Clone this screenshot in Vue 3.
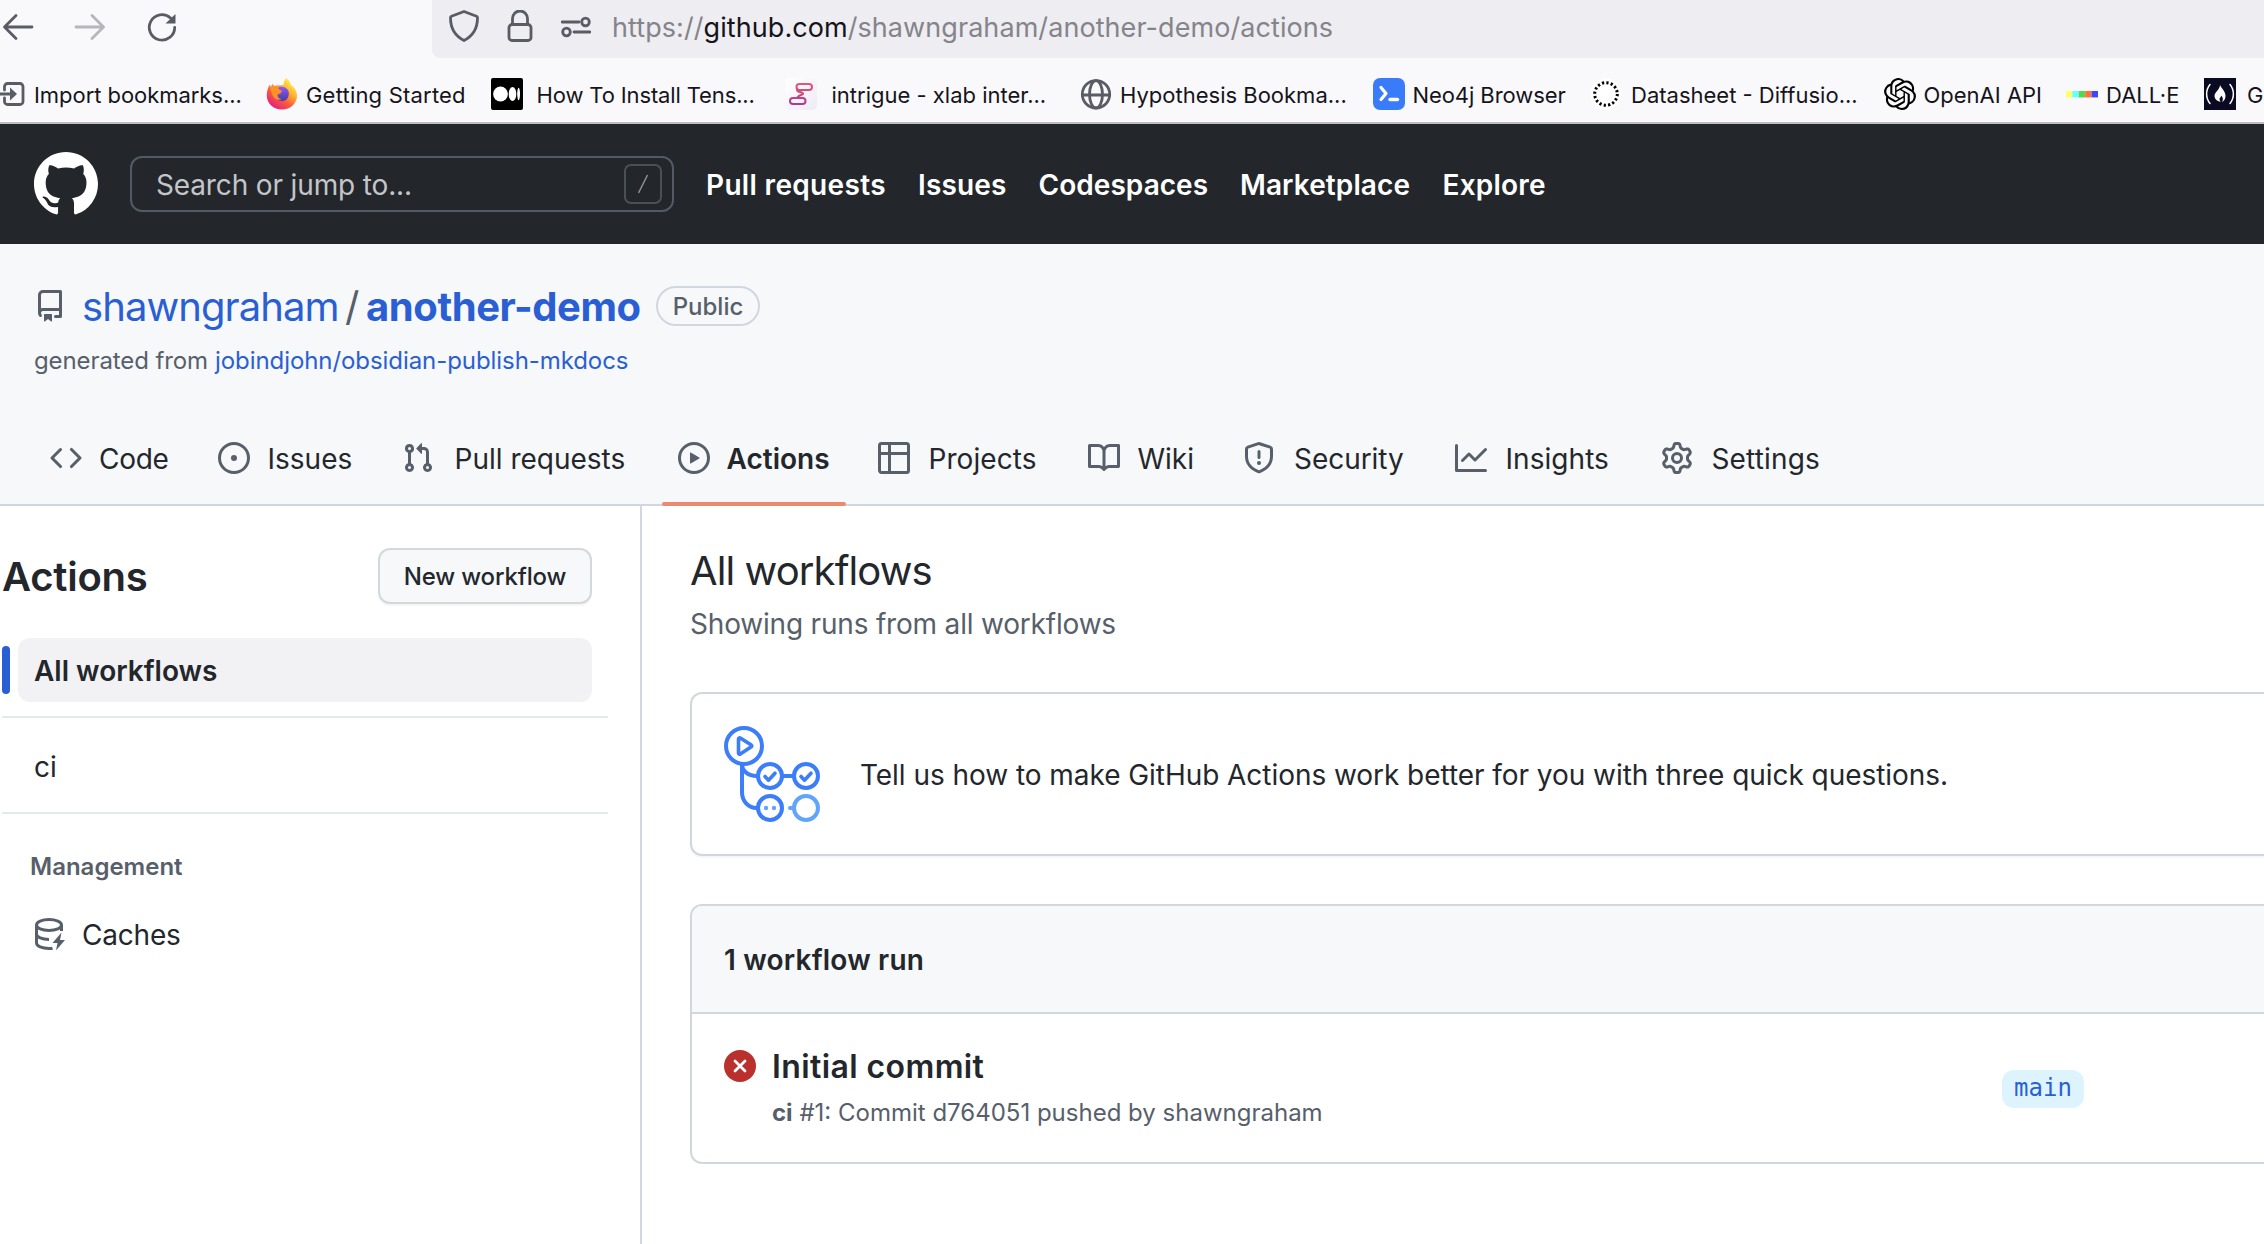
<script setup>
const bookmarks = [
  { icon: 'import', label: 'Import bookmarks...', width: 273, gap: 9, ls: -0.05 },
  { icon: 'firefox', label: 'Getting Started', width: 225, gap: 8, ls: 0.2 },
  { icon: 'medium', label: 'How To Install Tens...', width: 294, gap: 13.5, ls: -0.13 },
  { icon: 'intrigue', label: 'intrigue - xlab inter...', width: 295, gap: 14.5, ls: 0 },
  { icon: 'globe', label: 'Hypothesis Bookma...', width: 293, gap: 8, ls: 0 },
  { icon: 'neo4j', label: 'Neo4j Browser', width: 217, gap: 7.5, ls: -0.08 },
  { icon: 'dots', label: 'Datasheet - Diffusio...', width: 294, gap: 9, ls: 0 },
  { icon: 'openai', label: 'OpenAI API', width: 182, gap: 7.5, ls: 0 },
  { icon: 'dalle', label: 'DALL·E', width: 138, gap: 8, ls: 0 },
  { icon: 'fcc', label: 'G', width: 64, gap: 11, ls: 0 },
]

const nav = [
  { label: 'Pull requests', width: 212, ls: 0.33 },
  { label: 'Issues', width: 120.5, ls: 0.15 },
  { label: 'Codespaces', width: 201.5, ls: 0.05 },
  { label: 'Marketplace', width: 202.5, ls: 0.1 },
  { label: 'Explore', width: 110, ls: 0.2 },
]

const tabs = [
  { label: 'Code', width: 168, gap: 17, ls: -0.3, path: 'M4.72 3.22a.75.75 0 011.06 1.06L2.06 8l3.72 3.72a.75.75 0 11-1.06 1.06L.47 8.53a.75.75 0 010-1.06l4.25-4.25zm6.56 0a.75.75 0 10-1.06 1.06L13.94 8l-3.72 3.72a.75.75 0 101.06 1.06l4.25-4.25a.75.75 0 000-1.06l-4.25-4.25z' },
  { label: 'Issues', width: 184, gap: 17.5, ls: 0, path: 'M8 9.5a1.5 1.5 0 100-3 1.5 1.5 0 000 3zM8 0a8 8 0 100 16A8 8 0 008 0zM1.5 8a6.5 6.5 0 1113 0 6.5 6.5 0 01-13 0z' },
  { label: 'Pull requests', width: 276, gap: 20.5, ls: 0, path: 'M7.177 3.073L9.573.677A.25.25 0 0110 .854v4.792a.25.25 0 01-.427.177L7.177 3.427a.25.25 0 010-.354zM3.75 2.5a.75.75 0 100 1.5.75.75 0 000-1.5zm-2.25.75a2.25 2.25 0 113 2.122v5.256a2.251 2.251 0 11-1.5 0V5.372A2.25 2.25 0 011.5 3.25zM11 2.5h-1V4h1a1 1 0 011 1v5.628a2.251 2.251 0 101.5 0V5A2.5 2.5 0 0011 2.5zm1 10.25a.75.75 0 111.5 0 .75.75 0 01-1.5 0zM3.75 12a.75.75 0 100 1.5.75.75 0 000-1.5z' },
  { label: 'Actions', width: 200, gap: 16.5, ls: 0, active: true, path: 'M1.5 8a6.5 6.5 0 1113 0 6.5 6.5 0 01-13 0zM8 0a8 8 0 100 16A8 8 0 008 0zM6.379 5.227A.25.25 0 006 5.442v5.117a.25.25 0 00.379.214l4.264-2.559a.25.25 0 000-.428L6.379 5.227z' },
  { label: 'Projects', width: 210, gap: 18.5, ls: 0.07, path: 'M1.75 0A1.75 1.75 0 000 1.75v12.5C0 15.216.784 16 1.75 16h12.5A1.75 1.75 0 0016 14.25V1.75A1.75 1.75 0 0014.25 0H1.75zM1.5 1.75a.25.25 0 01.25-.25H5V5H1.5V1.75zM6.5 1.5h7.75a.25.25 0 01.25.25V5h-8V1.5zM1.5 6.5H5v8H1.75a.25.25 0 01-.25-.25V6.5zm5 0h8v7.75a.25.25 0 01-.25.25H6.5v-8z' },
  { label: 'Wiki', width: 155, gap: 17.5, ls: 0, path: 'M0 1.75A.75.75 0 01.75 1h4.253c1.227 0 2.317.59 3 1.501A3.744 3.744 0 0111.006 1h4.245a.75.75 0 01.75.75v10.5a.75.75 0 01-.75.75h-4.507a2.25 2.25 0 00-1.591.659l-.622.621a.75.75 0 01-1.06 0l-.622-.621A2.25 2.25 0 005.258 13H.75a.75.75 0 01-.75-.75V1.75zm8.755 3a2.25 2.25 0 012.25-2.25H14.5v9h-3.757c-.71 0-1.4.201-1.992.572l.004-7.322zm-1.504 7.324l.004-5.073-.002-2.253A2.25 2.25 0 005.003 2.5H1.5v9h3.757a3.75 3.75 0 011.994.574z' },
  { label: 'Security', width: 212, gap: 19, ls: -0.05, path: 'M7.467.133a1.75 1.75 0 011.066 0l5.25 1.68A1.75 1.75 0 0115 3.48V7c0 1.566-.32 3.182-1.303 4.682-.983 1.498-2.585 2.813-5.032 3.855a1.7 1.7 0 01-1.33 0c-2.447-1.042-4.049-2.357-5.032-3.855C1.32 10.182 1 8.566 1 7V3.48a1.75 1.75 0 011.217-1.667l5.25-1.68zm.61 1.429a.25.25 0 00-.153 0l-5.25 1.68a.25.25 0 00-.174.238V7c0 1.358.275 2.666 1.057 3.86.784 1.194 2.121 2.34 4.366 3.297a.2.2 0 00.154 0c2.245-.956 3.582-2.104 4.366-3.298C13.225 9.666 13.5 8.36 13.5 7V3.48a.25.25 0 00-.174-.237l-5.25-1.68zM9 10.5a1 1 0 11-2 0 1 1 0 012 0zm-.25-5.75a.75.75 0 10-1.5 0v3a.75.75 0 001.5 0v-3z' },
  { label: 'Insights', width: 206, gap: 18.5, ls: 0.05, path: 'M1.5 1.75a.75.75 0 00-1.5 0v12.5c0 .414.336.75.75.75h14.5a.75.75 0 000-1.5H1.5V1.75zm14.28 2.53a.75.75 0 00-1.06-1.06L10 7.94 7.53 5.47a.75.75 0 00-1.06 0L3.22 8.72a.75.75 0 001.06 1.06L7 7.06l2.47 2.47a.75.75 0 001.06 0l5.25-5.25z' },
  { label: 'Settings', width: 200, gap: 18.5, ls: 0.15, path: 'M7.429 1.525a6.593 6.593 0 011.142 0c.036.003.108.036.137.146l.289 1.105c.147.56.55.967.997 1.189.174.086.341.183.501.29.417.278.97.423 1.53.27l1.102-.303c.11-.03.175.016.195.046.219.31.41.641.573.989.014.031.022.11-.059.19l-.815.806c-.411.406-.562.957-.53 1.456a4.588 4.588 0 010 .582c-.032.499.119 1.05.53 1.456l.815.806c.08.08.073.159.059.19a6.494 6.494 0 01-.573.99c-.02.029-.086.074-.195.045l-1.103-.303c-.559-.153-1.112-.008-1.529.27-.16.107-.327.204-.5.29-.449.222-.851.628-.998 1.189l-.289 1.105c-.029.11-.101.143-.137.146a6.613 6.613 0 01-1.142 0c-.036-.003-.108-.037-.137-.146l-.289-1.105c-.147-.56-.55-.967-.997-1.189a4.502 4.502 0 01-.501-.29c-.417-.278-.97-.423-1.53-.27l-1.102.303c-.11.03-.175-.016-.195-.046a6.492 6.492 0 01-.573-.989c-.014-.031-.022-.11.059-.19l.815-.806c.411-.406.562-.957.53-1.456a4.587 4.587 0 010-.582c.032-.499-.119-1.05-.53-1.456l-.815-.806c-.08-.08-.073-.159-.059-.19a6.44 6.44 0 01.573-.99c.02-.029.086-.075.195-.045l1.103.303c.559.153 1.112.008 1.529-.27.16-.107.327-.204.5-.29.449-.222.851-.628.998-1.189l.289-1.105c.029-.11.101-.143.137-.146zM8 0c-.236 0-.47.01-.701.03-.743.065-1.29.615-1.458 1.261l-.29 1.106c-.017.066-.078.158-.211.224a5.994 5.994 0 00-.668.386c-.123.082-.233.09-.3.071L3.27 2.776c-.644-.177-1.392.02-1.82.63a7.977 7.977 0 00-.704 1.217c-.315.675-.111 1.422.363 1.891l.815.806c.05.048.098.147.088.294a6.084 6.084 0 000 .772c.01.147-.038.246-.088.294l-.815.806c-.474.469-.678 1.216-.363 1.891.2.428.436.835.704 1.218.428.609 1.176.806 1.82.63l1.103-.303c.066-.019.176-.011.299.071.213.143.436.272.668.386.133.066.194.158.212.224l.289 1.106c.169.646.715 1.196 1.458 1.26a8.094 8.094 0 001.402 0c.743-.064 1.29-.614 1.458-1.26l.29-1.106c.017-.066.078-.158.211-.224a5.98 5.98 0 00.668-.386c.123-.082.233-.09.3-.071l1.102.302c.644.177 1.392-.02 1.82-.63.268-.382.505-.789.704-1.217.315-.675.111-1.422-.364-1.891l-.814-.806c-.05-.048-.098-.147-.088-.294a6.1 6.1 0 000-.772c-.01-.147.039-.246.088-.294l.814-.806c.475-.469.679-1.216.364-1.891a7.992 7.992 0 00-.704-1.218c-.428-.609-1.176-.806-1.82-.63l-1.103.303c-.066.019-.176.011-.299-.071a5.991 5.991 0 00-.668-.386c-.133-.066-.194-.158-.212-.224L10.16 1.29C9.99.645 9.444.095 8.701.031A8.094 8.094 0 008 0zm1.5 8a1.5 1.5 0 11-3 0 1.5 1.5 0 013 0zM11 8a3 3 0 11-6 0 3 3 0 016 0z' },
]
</script>

<template>
  <div class="page">
    <!-- Browser chrome -->
    <div class="chrome">
      <div class="toolbar">
        <div class="buttons">
          <svg width="32" height="32" viewBox="0 0 32 32" class="line"><path d="M30 16H3M14 4.500L2.500 16 14 27.500" /></svg>
          <svg width="32" height="32" viewBox="0 0 32 32" class="line dim"><path d="M2 16h27M18 4.500L29.500 16 18 27.500" /></svg>
          <svg width="32" height="32" viewBox="0 0 32 32" class="line"><path d="M28.700 16.500a12.700 12.700 0 1 1-4.200-9.500l2 2" /><path d="M29.500 3v9.500H19.500z" fill="#5b5b66" stroke="none" /></svg>
        </div>
        <div class="urlbar">
          <svg class="line u1" width="32" height="32" viewBox="0 0 32 32"><path d="M16 1.500l12.500 4.700c.8.300 1 .9 1 1.600C29.500 18 25 26 16 30.500 7 26 2.500 18 2.500 7.800c0-.7.300-1.300 1-1.600z" /></svg>
          <svg class="line u2" width="26" height="32" viewBox="0 0 26 32"><rect x="2" y="14.500" width="22" height="16" rx="3" /><path d="M5.500 14.500V8.500a7.500 7.500 0 0 1 15 0v6" /></svg>
          <svg class="line u3" width="30" height="22" viewBox="0 0 30 22"><path d="M1 6h17M13 16h16" /><circle cx="24.500" cy="6" r="3.800" /><circle cx="5.500" cy="16" r="3.800" /></svg>
          <span class="url">https://<b>github.com</b>/shawngraham/another-demo/actions</span>
        </div>
      </div>
      <div class="bookmarks">
        <div v-for="b in bookmarks" :key="b.icon" class="bookmark" :style="{ flexBasis: b.width + 'px', gap: b.gap + 'px' }">
          <svg v-if="b.icon === 'import'" width="32" height="32" viewBox="0 0 32 32" class="line"><path d="M11.500 12V8.500a3 3 0 0 1 3-3H27a3 3 0 0 1 3 3v15a3 3 0 0 1-3 3H14.500a3 3 0 0 1-3-3V20M1 16h18" /><path d="M17 9.500l7 6.500-7 6.500z" fill="#5b5b66" stroke="none" /></svg>
          <svg v-else-if="b.icon === 'firefox'" width="32" height="32" viewBox="0 0 32 32">
            <defs>
              <linearGradient id="fx1" x1=".85" y1="0.100" x2=".2" y2="1"><stop offset="0" stop-color="#fff44f" /><stop offset=".3" stop-color="#ffb52e" /><stop offset=".6" stop-color="#fb5b3b" /><stop offset="1" stop-color="#e31587" /></linearGradient>
              <linearGradient id="fx2" x1="0" y1="0" x2="0" y2="1"><stop offset="0" stop-color="#9059ff" /><stop offset="1" stop-color="#453c9e" /></linearGradient>
            </defs>
            <path d="M20 0c3 2 4.500 4.500 5 7 3.500 2.500 6 6 6 10.500C31 25.500 24.500 31.500 16 31.500S.8 25.500.8 17.500C.8 13 2 9.500 4 6.500l.8 3 1.500-3.700L8 8c2-1 4-1 6-.7L17.500 7C17.500 4 18.500 2 20 0z" fill="url(#fx1)" />
            <path d="M13 9c4-1 8 .5 9.500 4 1.500 5-1.500 10-6.500 10s-7-4-6.500-7c2 1 4 .5 6-1-1-.8-3-1-4-1-.5-2 0-3.500 1.500-5z" fill="url(#fx2)" />
            <path d="M4 9c3-1.500 7-1 8.500 1.500.5 1.500 3 1.800 3.500 2.500-.5 2-4.500 2-4.500 4 0 2.500 2 4 4.500 4-4 2-8 0-9.500-4C5.500 14 4 12 4 9z" fill="#ff9328" />
          </svg>
          <svg v-else-if="b.icon === 'medium'" width="32" height="32" viewBox="0 0 32 32"><rect width="32" height="32" rx="2" /><g fill="#fff"><circle cx="9.500" cy="16" r="7.400" /><ellipse cx="21.500" cy="16" rx="3.800" ry="7" /><ellipse cx="27.600" cy="16" rx="1.400" ry="6.200" /></g></svg>
          <svg v-else-if="b.icon === 'intrigue'" width="32" height="32" viewBox="0 0 32 32">
            <defs><linearGradient id="ig" gradientUnits="userSpaceOnUse" x1="0" y1="6" x2="0" y2="26"><stop offset="0" stop-color="#dd5a78" /><stop offset="1" stop-color="#b23a8c" /></linearGradient><linearGradient id="igb" x1="0" y1="0" x2="1" y2="1"><stop offset="0" stop-color="#fff" /><stop offset="1" stop-color="#eeeaf4" /></linearGradient></defs>
            <rect width="32" height="32" rx="5" fill="url(#igb)" />
            <g fill="none" stroke="url(#ig)" stroke-width="2"><rect x="11.500" y="6" width="15.500" height="6" rx="3" /><rect x="5" y="20" width="15.500" height="6" rx="3" /><path d="M12.500 10.500c-2.500 4 4.500 3 5.500 5 .5 1.500-5.500 1.500-5.500 4.500" /></g>
          </svg>
          <svg v-else-if="b.icon === 'globe'" width="32" height="32" viewBox="0 0 32 32" class="line"><circle cx="16" cy="16.300" r="13.700" /><ellipse cx="16" cy="16.300" rx="6.500" ry="13.700" /><path d="M2.500 17h27" /></svg>
          <svg v-else-if="b.icon === 'neo4j'" width="32" height="32" viewBox="0 0 32 32"><rect width="32" height="32" rx="7" fill="#3a7bfa" /><path d="M8 9.500l5 6-5 6" fill="none" stroke="#fff" stroke-width="3.200" stroke-linecap="round" stroke-linejoin="round" /><path d="M17 21.500h7.500" stroke="#fff" stroke-width="3.400" stroke-linecap="round" /></svg>
          <svg v-else-if="b.icon === 'dots'" width="32" height="32" viewBox="0 0 32 32"><circle cx="16" cy="16" r="15.500" fill="#fff" /><circle cx="16" cy="16" r="11.300" fill="none" stroke="#000" stroke-width="3" stroke-dasharray="2.200 2.240" /></svg>
          <svg v-else-if="b.icon === 'openai'" width="32" height="32" viewBox="0 0 24 24"><path d="M22.2819 9.8211a5.9847 5.9847 0 0 0-.5157-4.9108 6.0462 6.0462 0 0 0-6.5098-2.9A6.0651 6.0651 0 0 0 4.9807 4.1818a5.9847 5.9847 0 0 0-3.9977 2.9 6.0462 6.0462 0 0 0 .7427 7.0966 5.98 5.98 0 0 0 .511 4.9107 6.051 6.051 0 0 0 6.5146 2.9001A5.9847 5.9847 0 0 0 13.2599 24a6.0557 6.0557 0 0 0 5.7718-4.2058 5.9894 5.9894 0 0 0 3.9977-2.9001 6.0557 6.0557 0 0 0-.7475-7.0729zm-9.022 12.6081a4.4755 4.4755 0 0 1-2.8764-1.0408l.1419-.0804 4.7783-2.7582a.7948.7948 0 0 0 .3927-.6813v-6.7369l2.02 1.1686a.071.071 0 0 1 .038.052v5.5826a4.504 4.504 0 0 1-4.4945 4.4944zm-9.6607-4.1254a4.4708 4.4708 0 0 1-.5346-3.0137l.142.0852 4.783 2.7582a.7712.7712 0 0 0 .7806 0l5.8428-3.3685v2.3324a.0804.0804 0 0 1-.0332.0615L9.74 19.9502a4.4992 4.4992 0 0 1-6.1408-1.6464zM2.3408 7.8956a4.485 4.485 0 0 1 2.3655-1.9728V11.6a.7664.7664 0 0 0 .3879.6765l5.8144 3.3543-2.0201 1.1685a.0757.0757 0 0 1-.071 0l-4.8303-2.7865A4.504 4.504 0 0 1 2.3408 7.872zm16.5963 3.8558L13.1038 8.364 15.1192 7.2a.0757.0757 0 0 1 .071 0l4.8303 2.7913a4.4944 4.4944 0 0 1-.6765 8.1042v-5.6772a.79.79 0 0 0-.407-.667zm2.0107-3.0231l-.142-.0852-4.7735-2.7818a.7759.7759 0 0 0-.7854 0L9.409 9.2297V6.8974a.0662.0662 0 0 1 .0284-.0615l4.8303-2.7866a4.4992 4.4992 0 0 1 6.6802 4.66zM8.3065 12.863l-2.02-1.1638a.0804.0804 0 0 1-.038-.0567V6.0742a4.4992 4.4992 0 0 1 7.3757-3.4537l-.142.0805L8.704 5.459a.7948.7948 0 0 0-.3927.6813zm1.0976-2.3654l2.602-1.4998 2.6069 1.4998v2.9994l-2.5974 1.4997-2.6067-1.4997Z" /></svg>
          <svg v-else-if="b.icon === 'dalle'" width="32" height="32" viewBox="0 0 32 32"><path fill="#ffff66" d="M0 13h6.400v6.400H0z" /><path fill="#66ffff" d="M6.400 13h6.400v6.400H6.400z" /><path fill="#51da4c" d="M12.800 13h6.400v6.400h-6.400z" /><path fill="#ff6e3c" d="M19.200 13h6.400v6.400h-6.400z" /><path fill="#3c46ff" d="M25.600 13H32v6.400h-6.400z" /></svg>
          <svg v-else width="32" height="32" viewBox="0 0 32 32"><path fill="#0a0a23" d="M0 0h32v32H0z" /><g fill="none" stroke="#fff" stroke-width="1.500" stroke-linecap="round"><path d="M6 6.500c-4.500 5.500-4.500 13.500 0 19M26 6.500c4.500 5.500 4.500 13.500 0 19" /></g><path fill="#fff" d="M16 7c1.500 3.500 5.500 6 5.500 11 0 3-1.500 4.800-3.500 6 1.500-2.500 1-5-1-6.500.2 2-1.500 2-1.500 3.500 0 1 .5 2 1 3-3.500-1-6-3-6-6 0-4 5.500-6.500 5.500-11z" /></svg>
          <span :style="{ letterSpacing: b.ls + 'px' }">{{ b.label }}</span>
        </div>
      </div>
    </div>

    <!-- Site header -->
    <header class="header">
      <svg class="mark" width="64" height="64" viewBox="0 0 16 16" fill="#fff"><path d="M8 0C3.580 0 0 3.580 0 8c0 3.540 2.290 6.530 5.470 7.590.4.070.55-.17.55-.38 0-.19-.01-.82-.01-1.490-2.010.37-2.530-.49-2.690-.94-.09-.23-.48-.94-.82-1.130-.28-.15-.68-.52-.01-.53.63-.01 1.080.58 1.230.82.72 1.210 1.870.87 2.330.66.07-.52.28-.87.51-1.070-1.780-.2-3.640-.89-3.640-3.950 0-.87.31-1.590.82-2.150-.08-.2-.36-1.020.08-2.120 0 0 .67-.21 2.200.82.64-.18 1.320-.27 2-.27.68 0 1.360.09 2 .27 1.530-1.040 2.200-.82 2.200-.82.44 1.100.16 1.920.08 2.120.51.56.82 1.270.82 2.150 0 3.070-1.870 3.750-3.650 3.950.29.25.54.73.54 1.480 0 1.070-.01 1.930-.01 2.200 0 .21.15.46.55.38A8.013 8.013 0 0016 8c0-4.420-3.580-8-8-8z" /></svg>
      <div class="search">
        <span class="hint">Search or jump to...</span>
        <span class="key"><svg width="12" height="20" viewBox="0 0 12 20"><path d="M1.500 19L10.500 1" stroke="#8b8f94" stroke-width="1.600" /></svg></span>
      </div>
      <nav class="nav">
        <a v-for="n in nav" :key="n.label" :style="{ flexBasis: n.width + 'px', letterSpacing: n.ls + 'px' }">{{ n.label }}</a>
      </nav>
    </header>

    <!-- Repository header -->
    <section class="repo">
      <div class="title">
        <svg width="32" height="32" viewBox="0 0 16 16" class="oct"><path fill-rule="evenodd" d="M2 2.500A2.500 2.500 0 014.500 0h8.750a.75.75 0 01.75.75v12.500a.75.75 0 01-.75.75h-2.500a.75.75 0 110-1.500h1.750v-2h-8a1 1 0 00-.714 1.700.75.75 0 01-1.072 1.050A2.495 2.495 0 012 11.500v-9zm10.500-1V9h-8c-.356 0-.694.074-1 .208V2.500a1 1 0 011-1h8zM5 12.250v3.250a.25.25 0 00.4.2l1.450-1.087a.25.25 0 01.3 0L8.600 15.700a.25.25 0 00.4-.2v-3.250a.25.25 0 00-.25-.25h-3.500a.25.25 0 00-.25.25z" /></svg>
        <a class="owner">shawngraham</a>
        <span class="slash">/</span>
        <a class="name">another-demo</a>
        <span class="pill">Public</span>
      </div>
      <p class="generated"><span>generated from</span><a>jobindjohn/obsidian-publish-mkdocs</a></p>
      <div class="tabs">
        <a v-for="t in tabs" :key="t.label" class="tab" :class="{ active: t.active }" :style="{ flexBasis: t.width + 'px', gap: t.gap + 'px' }">
          <svg width="32" height="32" viewBox="0 0 16 16" class="oct"><path fill-rule="evenodd" :d="t.path" /></svg>
          <span :style="{ letterSpacing: t.ls + 'px' }">{{ t.label }}</span>
        </a>
      </div>
    </section>

    <div class="body">
      <aside class="side">
        <div class="sidehead">
          <h2>Actions</h2>
          <button>New workflow</button>
        </div>
        <div class="current"><i></i><span>All workflows</span></div>
        <div class="item">ci</div>
        <div class="group">Management</div>
        <div class="caches">
          <svg width="32" height="32" viewBox="0 0 32 32" fill="none" stroke="#57606a" stroke-width="3"><ellipse cx="15" cy="7" rx="12.500" ry="5.500" /><path d="M2.500 7v18c0 3 5.500 5.500 12.500 5.500 1.500 0 2.500 0 3.500-.3M2.500 16c0 3 5.500 5.500 12.500 5.500M27.500 7v6" /><path d="M27.500 14.500L18.500 25h5l-1.500 7.500L31 22h-5z" fill="#57606a" stroke="none" /></svg>
          <span>Caches</span>
        </div>
      </aside>

      <main class="main">
        <h1>All workflows</h1>
        <p class="sub">Showing runs from all workflows</p>
        <div class="survey">
          <svg width="96" height="96" viewBox="0 0 96 96" fill="none" stroke="#3c7dfa" stroke-width="4">
            <circle cx="20" cy="20" r="18" />
            <path d="M14.500 13v14c0 1 1 1.500 1.800 1l11-7.200c.7-.5.7-1.200 0-1.700l-11-7c-.8-.5-1.800 0-1.800.9z" stroke-width="3.600" />
            <path d="M18 38v28c0 9 6 16 15 16M18 38c0 7 6 12 15 12" />
            <circle cx="46" cy="50" r="12" /><circle cx="82" cy="50" r="12" /><circle cx="46" cy="82" r="12" />
            <path d="M58 50h12" />
            <path d="M41 50.500l3.500 3.700 6.500-7M77 50.500l3.500 3.700 6.500-7" stroke-linecap="round" stroke-linejoin="round" stroke-width="3.600" />
            <g stroke="#61a5fb"><circle cx="82" cy="82" r="12" /><path d="M66 82h4" stroke-linecap="round" /></g>
            <g fill="#61a5fb" stroke="none"><circle cx="42" cy="82" r="2.200" /><circle cx="50" cy="82" r="2.200" /></g>
          </svg>
          <span>Tell us how to make GitHub Actions work better for you with three quick questions.</span>
        </div>
        <div class="runs">
          <div class="runshead">1 workflow run</div>
          <div class="run">
            <svg width="32" height="32" viewBox="0 0 16 16"><circle cx="8" cy="8" r="8" fill="#b9302d" /><path d="M5.500 5.500l5 5M10.500 5.500l-5 5" stroke="#fff" stroke-width="1.400" stroke-linecap="round" /></svg>
            <div class="runtext">
              <h3>Initial commit</h3>
              <p><b>ci</b> #1: Commit d764051 pushed by shawngraham</p>
            </div>
            <span class="branch">main</span>
          </div>
        </div>
      </main>
    </div>
  </div>
</template>

<style>
body { margin: 0; overflow: hidden; }
</style>

<style scoped>
* { box-sizing: border-box; }
.page { width: 2264px; height: 1244px; overflow: hidden; display: flex; flex-direction: column; background: #fff; color: #23272c; font-family: Inter, "Liberation Sans", sans-serif; font-size: 28px; white-space: nowrap; }
h1, h2, h3, p { margin: 0; }
svg { flex: none; display: block; }
.oct { fill: #57606a; }
.line { fill: none; stroke: #5b5b66; stroke-width: 2.8; stroke-linecap: round; stroke-linejoin: round; }
.dim { opacity: .42; }

.chrome { height: 124px; background: #f9f9fb; border-bottom: 2px solid #bdbcc1; }
.toolbar { height: 58px; display: flex; }
.buttons { width: 432px; padding: 0 0 4px 2px; display: flex; align-items: center; gap: 40px; }
.urlbar { flex: 1; display: flex; align-items: center; padding: 0 0 4px 16px; background: #eeedf2; border-radius: 0 0 0 8px; }
.u1 { margin-top: -3px; }
.u2 { margin: 0 0 2px 27px; }
.u3 { margin: 0 0 0 28px; }
.url { margin-left: 21px; font-size: 27px; letter-spacing: .07px; color: #85848a; }
.url b { font-weight: 400; color: #15141a; }
.bookmarks { height: 64px; padding: 8px 0 0; margin-left: -7px; display: flex; align-items: center; font-size: 22px; color: #15141a; }
.bookmark { flex: 0 0 auto; display: flex; align-items: center; }
.bookmark span { margin-top: 1px; }

.header { height: 120px; background: #23272c; display: flex; align-items: center; }
.mark { margin-left: 34px; }
.search { width: 544px; height: 56px; margin-left: 32px; border: 2px solid #545a62; border-radius: 12px; padding: 0 10px 0 24px; display: flex; align-items: center; justify-content: space-between; color: #c3c5c8; }
.hint { letter-spacing: -.14px; margin-top: 2px; }
.key { width: 38px; height: 40px; border: 2px solid #4b5056; border-radius: 7px; display: flex; align-items: center; justify-content: center; }
.nav { margin: 2px 0 0 32px; display: flex; font-weight: 600; color: #fff; }
.nav a { flex: 0 0 auto; }

.repo { height: 262px; background: #f6f8fa; border-bottom: 2px solid #d0d7de; display: flex; flex-direction: column; }
.title { height: 40px; margin: 42px 0 0 34px; display: flex; align-items: center; font-size: 40px; line-height: 40px; color: #2a5fd3; }
.owner { width: 263px; margin: 2px 0 0 16px; letter-spacing: -.92px; }
.slash { width: 21px; margin-top: 2px; color: #57606a; }
.name { width: 290px; margin-top: 2px; font-weight: 700; letter-spacing: -.42px; }
.pill { width: 104px; height: 40px; border: 2px solid #d0d7de; border-radius: 20px; font-size: 24px; line-height: 37px; font-weight: 500; color: #57606a; text-align: center; }
.generated { height: 40px; margin: 14px 0 0 34px; display: flex; align-items: center; font-size: 24px; color: #57606a; }
.generated span { width: 181px; letter-spacing: -.1px; }
.generated a { color: #2a5fd3; letter-spacing: -.07px; }
.tabs { margin: 30px 0 0 50px; height: 94px; display: flex; }
.tab { flex: 0 0 auto; height: 96px; display: flex; align-items: center; position: relative; }
.tab span { margin-top: 2px; }
.active { font-weight: 600; }
.active::after { content: ""; position: absolute; left: -16px; width: 184px; height: 4px; bottom: 0; background: #ec8a70; border-radius: 2px; }

.body { flex: 1; display: flex; }
.side { width: 642px; border-right: 2px solid #d0d7de; padding: 42px 32px 0 2px; }
.sidehead { height: 56px; padding-right: 16px; display: flex; align-items: center; justify-content: space-between; }
h2 { font-size: 40px; font-weight: 600; letter-spacing: -.25px; }
button { width: 214px; height: 56px; border: 2px solid #d5d8da; border-radius: 12px; background: #f6f8fa; box-shadow: 0 2px 0 rgba(31, 35, 40, .04); font: 500 24px Inter, sans-serif; letter-spacing: -.15px; color: #23272c; padding: 1px 0 0; }
.current { margin: 34px 16px 14px 0; height: 64px; display: flex; align-items: center; gap: 8px; font-weight: 600; }
.current i { width: 8px; height: 48px; background: #2a5fd3; border-radius: 4px; }
.current span { flex: 1; height: 64px; line-height: 66px; border-radius: 12px; background: #f2f2f4; padding-left: 16px; }
.item { height: 98px; border: solid #e6e9ec; border-width: 2px 0; line-height: 98px; padding-left: 32px; }
.group { margin-top: 33px; line-height: 40px; padding-left: 28px; font-size: 24px; font-weight: 600; color: #57606a; }
.caches { margin-top: 27px; height: 40px; display: flex; align-items: center; padding-left: 32px; gap: 16px; letter-spacing: -.2px; }
.caches span { margin-top: 1px; }

.main { flex: 1; padding: 41px 0 0 48px; }
h1 { font-size: 40px; font-weight: 400; line-height: 48px; letter-spacing: -.9px; }
.sub { margin-top: 9px; line-height: 40px; color: #57606a; letter-spacing: -.19px; }
.survey { margin-top: 48px; height: 164px; border: 2px solid #d0d7de; border-right: 0; border-radius: 12px 0 0 12px; box-shadow: 0 2px 0 rgba(31, 35, 40, .04); display: flex; align-items: center; padding-left: 32px; gap: 40px; }
.survey span { margin-top: 2px; letter-spacing: -.05px; }
.runs { margin-top: 48px; height: 260px; border: 2px solid #d0d7de; border-right: 0; border-radius: 12px 0 0 12px; overflow: hidden; }
.runshead { height: 108px; line-height: 108px; background: #f6f8fa; border-bottom: 2px solid #d0d7de; padding-left: 32px; font-weight: 600; letter-spacing: .2px; }
.run { display: flex; padding: 32px 0 0 32px; }
.run svg { margin-top: 4px; }
.runtext { width: 1230px; margin-left: 16px; }
h3 { font-size: 32px; line-height: 42px; font-weight: 600; letter-spacing: .4px; }
.runtext p { margin-top: 6px; font-size: 24px; line-height: 37px; color: #57606a; }
.branch { width: 82px; height: 38px; margin-top: 24px; border-radius: 12px; background: #ddf4ff; color: #2a5fd3; font: 24px/36px "DejaVu Sans Mono", monospace; text-align: center; }
</style>
